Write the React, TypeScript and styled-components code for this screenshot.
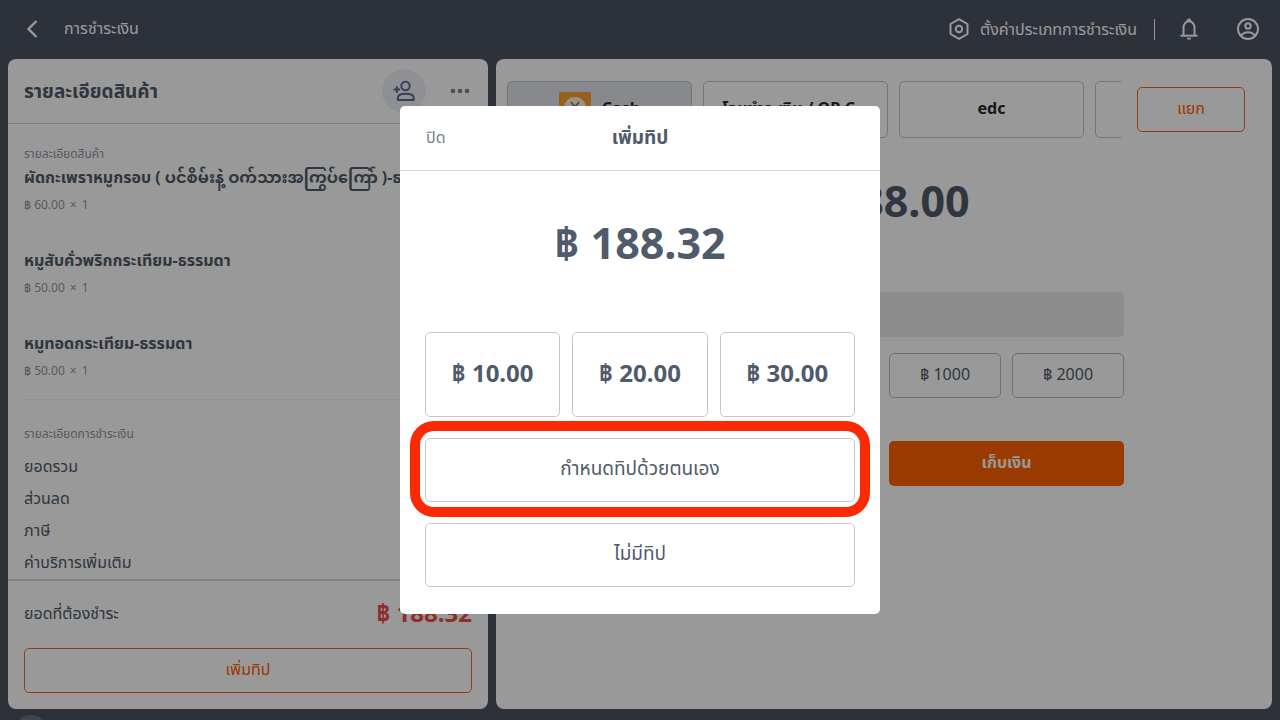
import React from "react";
import styled, { createGlobalStyle } from "styled-components";

const GlobalStyle = createGlobalStyle`
  *, *::before, *::after { box-sizing: border-box; }
  body {
    margin: 0;
    background: #4b535f;
    color: #4f5b6b;
    font-family: "Noto Sans", "Noto Sans Thai", "Noto Sans Myanmar", sans-serif;
    font-size: 16px;
    line-height: 24px;
  }
  button, input { font: inherit; color: inherit; }
  button { cursor: pointer; padding: 0; }
  h1, h2, h3, p, ul { margin: 0; padding: 0; font-size: inherit; font-weight: inherit; }
`;

const Screen = styled.div`
  height: 100vh;
  display: flex;
  flex-direction: column;
  overflow: hidden;
`;

const TopBar = styled.header`
  flex: none;
  height: 59px;
  padding: 0 20px 1px;
  display: flex;
  align-items: center;
  color: #fff;
`;

const PageTitle = styled.h1`
  flex: 1;
  padding: 0 0 2px 20px;
`;

const IconButton = styled.button`
  display: flex;
  align-items: center;
  justify-content: center;
  width: 24px;
  height: 24px;
  border: 0;
  background: none;
`;

const SettingsLink = styled.a`
  display: flex;
  align-items: center;
  gap: 9px;
  color: inherit;
  text-decoration: none;
`;

const Separator = styled.span`
  width: 1px;
  height: 21px;
  margin: 0 22px 0 17px;
  background: #fff;
`;

const TopActions = styled.div`
  display: flex;
  gap: 35px;
`;

const Columns = styled.main`
  flex: 1;
  min-height: 0;
  display: grid;
  grid-template-columns: 480px minmax(0, 1fr);
  gap: 8px;
  padding: 0 8px;
`;

const Panel = styled.section`
  display: flex;
  flex-direction: column;
  min-height: 0;
  border-radius: 8px;
  background: #fff;
  overflow: hidden;
`;

const PanelHeader = styled.div`
  flex: none;
  height: 65px;
  padding: 0 16px;
  display: flex;
  align-items: center;
  border-bottom: 1px solid #d3d6da;
`;

const PanelTitle = styled.h2`
  flex: 1;
  font-size: 19px;
  font-weight: 700;
`;

const RoundButton = styled(IconButton)`
  width: 44px;
  height: 44px;
  margin-right: 22px;
  border-radius: 50%;
  background: #eef1f6;
  color: #5b6b8c;
`;

const MoreButton = styled(IconButton)`
  color: #7d838e;
`;

const Details = styled.div`
  flex: 1;
  min-height: 0;
  padding: 18px 16px 0;
  overflow: hidden;
`;

const Caption = styled.p`
  font-size: 12px;
  color: #8e97a5;
`;

const PriceLine = styled(Caption)`
  display: flex;
  gap: 5px;
`;

const ItemList = styled.ul`
  list-style: none;
  display: grid;
  gap: 32px;
  padding-bottom: 16px;
  border-bottom: 1px solid #eceef0;
`;

const ItemName = styled.h3`
  height: 22px;
  margin-bottom: 5px;
  line-height: 22px;
  font-weight: 700;
  white-space: nowrap;
`;

const SummaryCaption = styled(Caption)`
  margin: 22px 0 4px;
`;

const SummaryRow = styled.p`
  line-height: 32px;
`;

const Footer = styled.div`
  flex: none;
  padding: 16px;
  border-top: 2px solid #d9dbde;
`;

const TotalRow = styled.div`
  display: flex;
  align-items: center;
  justify-content: space-between;
  height: 32px;
  margin-bottom: 19px;
`;

const TotalValue = styled.strong`
  font-size: 24px;
  color: #ef4b48;
`;

const OutlineButton = styled.button<{ $width: string }>`
  flex: none;
  width: ${(p) => p.$width};
  height: 45px;
  padding-bottom: 3px;
  border: 1px solid #f26a1b;
  border-radius: 5px;
  background: #fff;
  color: #ff6100;
`;

const MethodBar = styled.div`
  display: flex;
  align-items: center;
  gap: 16px;
  padding: 22px 27px 0 11px;
`;

const MethodStrip = styled.div`
  flex: 1;
  min-width: 0;
  display: flex;
  gap: 11px;
  overflow: hidden;
`;

const Method = styled.button<{ $active?: boolean }>`
  flex: none;
  display: flex;
  align-items: center;
  justify-content: center;
  gap: 11px;
  width: 185px;
  height: 57px;
  padding-bottom: 3px;
  border: 1px solid #bcc4d0;
  border-radius: 5px;
  background: ${(p) => (p.$active ? "#e1e5ec" : "#fff")};
  color: #25282e;
  font-weight: 700;
`;

const PayArea = styled.div`
  width: 480px;
  max-width: 100%;
  margin: 31px auto 0;
`;

const Amount = styled.p`
  font-size: 43px;
  line-height: 64px;
  font-weight: 700;
  text-align: center;
`;

const CashInput = styled.input`
  display: block;
  width: 100%;
  height: 45px;
  margin: 59px 0 16px;
  border: 0;
  border-radius: 5px;
  background: #ececec;
`;

const HalfColumn = styled.div`
  width: 235px;
  margin-left: auto;
`;

const QuickRow = styled.div`
  display: grid;
  grid-template-columns: 1fr 1fr;
  gap: 11px;
  margin-bottom: 43px;
`;

const QuickButton = styled.button`
  height: 45px;
  padding-bottom: 3px;
  border: 1px solid #b3bfd0;
  border-radius: 5px;
  background: #fff;
`;

const PrimaryButton = styled.button`
  width: 100%;
  height: 45px;
  padding-bottom: 3px;
  border: 0;
  border-radius: 5px;
  background: #ff6100;
  color: #fff;
  font-weight: 700;
`;

const BottomBar = styled.footer`
  flex: none;
  height: 11px;
  padding: 6px 14px 0;
  overflow: hidden;
`;

const Bubble = styled.span`
  display: block;
  width: 34px;
  height: 34px;
  border-radius: 50%;
  background: #6b7280;
`;

const Backdrop = styled.div`
  position: fixed;
  inset: 0;
  display: flex;
  align-items: center;
  justify-content: center;
  background: rgba(0, 0, 0, 0.4);
`;

const Dialog = styled.div`
  width: 480px;
  max-width: 100%;
  border-radius: 5px;
  background: #fff;
`;

const DialogHeader = styled.div`
  display: grid;
  grid-template-columns: 1fr auto 1fr;
  align-items: center;
  height: 65px;
  padding: 0 26px 3px;
  border-bottom: 1px solid #d3d6da;
`;

const CloseButton = styled.button`
  justify-self: start;
  border: 0;
  background: none;
  color: #778190;
`;

const DialogTitle = styled.h2`
  font-size: 19px;
  font-weight: 700;
`;

const DialogBody = styled.div`
  display: grid;
  gap: 21px;
  padding: 40px 25px 27px;
`;

const TipRow = styled.div`
  display: grid;
  grid-template-columns: repeat(3, 1fr);
  gap: 12px;
  margin-top: 36px;
`;

const ChoiceButton = styled.button<{ $large?: boolean }>`
  width: 100%;
  height: ${(p) => (p.$large ? 85 : 64)}px;
  padding-bottom: 4px;
  border: 1px solid #c3c8d0;
  border-radius: 5px;
  background: #fff;
  font-size: ${(p) => (p.$large ? 24 : 19)}px;
  font-weight: ${(p) => (p.$large ? 700 : 400)};
`;

const Highlight = styled.div`
  position: relative;

  &::after {
    content: "";
    position: absolute;
    inset: -17px -15px -15px;
    border: 10px solid #fa2a05;
    border-radius: 24px;
    pointer-events: none;
  }
`;

const BackIcon = () => (
  <svg width="24" height="24" viewBox="0 0 24 24" fill="none" stroke="currentColor" strokeWidth="2.4">
    <path d="M16.500 4 8.500 12l8 8" />
  </svg>
);

const SettingsIcon = () => (
  <svg width="24" height="24" viewBox="0 0 24 24" fill="none" stroke="currentColor" strokeWidth="2" strokeLinejoin="round">
    <path d="M12 2.200 20.500 7v10L12 21.800 3.500 17V7z" />
    <circle cx="12" cy="12" r="3.200" />
  </svg>
);

const BellIcon = () => (
  <svg width="24" height="24" viewBox="0 0 24 24" fill="none" stroke="currentColor" strokeWidth="2">
    <path d="M6.500 18.500v-8a5.500 6.300 0 0 1 11 0v8" />
    <path d="M3.500 18.700h17" />
    <path d="M10.200 3.700a1.800 1.800 0 0 1 3.600 0z" fill="currentColor" strokeWidth="1" />
    <path d="M9.700 20.800h4.600a2.300 2 0 0 1-4.600 0z" fill="currentColor" stroke="none" />
  </svg>
);

const AccountIcon = () => (
  <svg width="24" height="24" viewBox="0 0 24 24" fill="none" stroke="currentColor" strokeWidth="2">
    <circle cx="12" cy="12" r="10" />
    <circle cx="12" cy="9" r="2.700" />
    <path d="M5 18.700c1.500-2.200 4.200-3.400 7-3.400s5.500 1.200 7 3.400" />
  </svg>
);

const AddPersonIcon = () => (
  <svg width="24" height="24" viewBox="0 0 24 24" fill="none" stroke="currentColor" strokeWidth="2">
    <circle cx="13.500" cy="7" r="4.200" />
    <path d="M5.900 21v-2.300c0-2.600 3.200-4 7.900-4s7.900 1.400 7.900 4V21z" strokeLinejoin="round" />
    <path d="M1.500 10.500h6.600M4.800 7.200v6.600" />
  </svg>
);

const MoreIcon = () => (
  <svg width="24" height="24" viewBox="0 0 24 24" fill="currentColor">
    <circle cx="5" cy="12" r="2.300" />
    <circle cx="12" cy="12" r="2.300" />
    <circle cx="19" cy="12" r="2.300" />
  </svg>
);

const CashIcon = () => (
  <svg width="32" height="32" viewBox="0 0 32 32" fill="none">
    <rect width="32" height="32" rx="2" fill="#ff9f33" />
    <circle cx="16" cy="16" r="11" fill="#fff3df" />
    <path d="m12 10 4 5 4-5M16 15v7M12 17h8" stroke="#8f7a5a" strokeWidth="2" />
  </svg>
);

const items = [
  { name: "ผัดกะเพราหมูกรอบ ( ပင်စိမ်းနဲ့ ဝက်သားအကြွပ်ကြော် )-ธรรมดา", price: "฿ 60.00", quantity: 1 },
  { name: "หมูสับคั่วพริกกระเทียม-ธรรมดา", price: "฿ 50.00", quantity: 1 },
  { name: "หมูทอดกระเทียม-ธรรมดา", price: "฿ 50.00", quantity: 1 },
];

const summary = ["ยอดรวม", "ส่วนลด", "ภาษี", "ค่าบริการเพิ่มเติม"];
const tips = ["฿ 10.00", "฿ 20.00", "฿ 30.00"];

export default function App() {
  return (
    <>
      <GlobalStyle />
      <Screen>
        <TopBar>
          <IconButton aria-label="back"><BackIcon /></IconButton>
          <PageTitle>การชำระเงิน</PageTitle>
          <SettingsLink href="#settings"><SettingsIcon />ตั้งค่าประเภทการชำระเงิน</SettingsLink>
          <Separator />
          <TopActions>
            <IconButton aria-label="notifications"><BellIcon /></IconButton>
            <IconButton aria-label="account"><AccountIcon /></IconButton>
          </TopActions>
        </TopBar>
        <Columns>
          <Panel>
            <PanelHeader>
              <PanelTitle>รายละเอียดสินค้า</PanelTitle>
              <RoundButton aria-label="add customer"><AddPersonIcon /></RoundButton>
              <MoreButton aria-label="more"><MoreIcon /></MoreButton>
            </PanelHeader>
            <Details>
              <Caption>รายละเอียดสินค้า</Caption>
              <ItemList>
                {items.map((item) => (
                  <li key={item.name}>
                    <ItemName>{item.name}</ItemName>
                    <PriceLine>
                      <span>{item.price}</span>
                      <span>×</span>
                      <span>{item.quantity}</span>
                    </PriceLine>
                  </li>
                ))}
              </ItemList>
              <SummaryCaption>รายละเอียดการชำระเงิน</SummaryCaption>
              {summary.map((label) => (
                <SummaryRow key={label}>{label}</SummaryRow>
              ))}
            </Details>
            <Footer>
              <TotalRow>
                <span>ยอดที่ต้องชำระ</span>
                <TotalValue>฿ 188.32</TotalValue>
              </TotalRow>
              <OutlineButton $width="100%">เพิ่มทิป</OutlineButton>
            </Footer>
          </Panel>
          <Panel>
            <MethodBar>
              <MethodStrip>
                <Method $active><CashIcon />Cash</Method>
                <Method>โอนชำระเงิน / QR C…</Method>
                <Method>edc</Method>
                <Method aria-label="other" />
              </MethodStrip>
              <OutlineButton $width="108px">แยก</OutlineButton>
            </MethodBar>
            <PayArea>
              <Amount>฿ 188.00</Amount>
              <CashInput aria-label="cash received" />
              <HalfColumn>
                <QuickRow>
                  <QuickButton>฿ 1000</QuickButton>
                  <QuickButton>฿ 2000</QuickButton>
                </QuickRow>
                <PrimaryButton>เก็บเงิน</PrimaryButton>
              </HalfColumn>
            </PayArea>
          </Panel>
        </Columns>
        <BottomBar><Bubble /></BottomBar>
      </Screen>
      <Backdrop>
        <Dialog role="dialog" aria-modal="true" aria-labelledby="tip-title">
          <DialogHeader>
            <CloseButton>ปิด</CloseButton>
            <DialogTitle id="tip-title">เพิ่มทิป</DialogTitle>
          </DialogHeader>
          <DialogBody>
            <Amount>฿ 188.32</Amount>
            <TipRow>
              {tips.map((tip) => (
                <ChoiceButton key={tip} $large>{tip}</ChoiceButton>
              ))}
            </TipRow>
            <Highlight>
              <ChoiceButton>กำหนดทิปด้วยตนเอง</ChoiceButton>
            </Highlight>
            <ChoiceButton>ไม่มีทิป</ChoiceButton>
          </DialogBody>
        </Dialog>
      </Backdrop>
    </>
  );
}
